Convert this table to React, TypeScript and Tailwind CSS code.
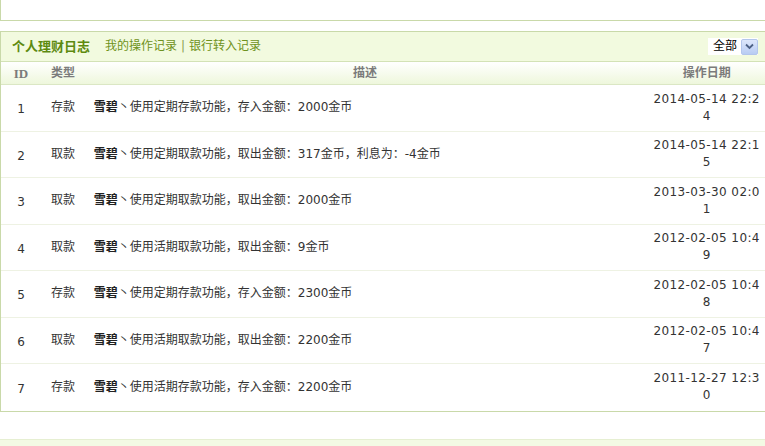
import React from "react";

const ROWS = [
	{ id: 1, type: "存款", text: "使用定期存款功能，存入金额：2000金币", date: "2014-05-14 22:24" },
	{ id: 2, type: "取款", text: "使用定期取款功能，取出金额：317金币，利息为：-4金币", date: "2014-05-14 22:15" },
	{ id: 3, type: "取款", text: "使用定期取款功能，取出金额：2000金币", date: "2013-03-30 02:01" },
	{ id: 4, type: "取款", text: "使用活期取款功能，取出金额：9金币", date: "2012-02-05 10:49" },
	{ id: 5, type: "存款", text: "使用定期存款功能，存入金额：2300金币", date: "2012-02-05 10:48" },
	{ id: 6, type: "取款", text: "使用活期取款功能，取出金额：2200金币", date: "2012-02-05 10:47" },
	{ id: 7, type: "存款", text: "使用活期存款功能，存入金额：2200金币", date: "2011-12-27 12:30" },
];

export default function App() {
	return (
		<div className="h-[446px] w-[765px] overflow-hidden bg-white font-['DejaVu_Sans','Noto_Sans_CJK_SC',sans-serif] text-[12px] leading-[17px] text-[#333]">
			<div className="w-[770px]">
				{/* previous box, cut off at the top */}
				<div className="h-[21px] border-x border-b border-[#c9d9a9] bg-white" />

				<div className="mt-[10px] border border-[#c9d9a9]">
					{/* title bar */}
					<div className="flex h-[30px] items-center justify-between border-b border-[#d3e2b6] bg-[#f2fadf] pl-[11px] pr-[11px]">
						<div className="flex items-center">
							<span className="text-[13px] font-bold text-[#5d8a10]">个人理财日志</span>
							<span className="ml-[15px] text-[#6f9220]">我的操作记录</span>
							<span className="mx-[4px] text-[#8aa050]">|</span>
							<span className="text-[#6f9220]">银行转入记录</span>
						</div>
						<div className="flex h-[17px] items-center bg-white pl-[5px]">
							<span className="text-black">全部</span>
							<span className="ml-[4px] flex h-[16px] w-[17px] items-center justify-center rounded-[2px] border border-[#b3c6ec] bg-gradient-to-b from-[#dde7fb] to-[#b8ccf3]">
								<svg width="9" height="7" viewBox="0 0 9 7">
									<path d="M1 1.5 L4.5 5 L8 1.5" fill="none" stroke="#4d6185" strokeWidth="1.8" />
								</svg>
							</span>
						</div>
					</div>

					{/* column header */}
					<div className="flex h-[23px] items-center border-b border-[#dbe7c4] bg-gradient-to-b from-white to-[#eef7dc] font-bold text-[#7b7b7b]">
						<div className="w-[40px] text-center font-['Liberation_Serif',serif] text-[13px]">ID</div>
						<div className="w-[45px] pl-[10px]">类型</div>
						<div className="w-[560px] text-center">描述</div>
						<div className="w-[125px] text-center">操作日期</div>
					</div>

					{ROWS.map((r, i) => (
						<div
							key={r.id}
							className={
								"flex h-[46.5px] items-center " +
								(i < ROWS.length - 1 ? "border-b border-[#eef2e3]" : "")
							}
						>
							<div className="w-[40px] pt-[4px] text-center">{r.id}</div>
							<div className="w-[45px] pl-[10px]">{r.type}</div>
							<div className="w-[560px] pl-[8px]">
								<span className="font-bold text-[#222]">雪碧</span>丶{r.text}
							</div>
							<div className="w-[125px] px-[7px] text-center tracking-[0.4px] break-all">{r.date}</div>
						</div>
					))}
				</div>

				{/* next box, cut off at the bottom */}
				<div className="mt-[27px] h-[30px] border-t border-[#e6efd2] bg-[#f3fae4]" />
			</div>
		</div>
	);
}
